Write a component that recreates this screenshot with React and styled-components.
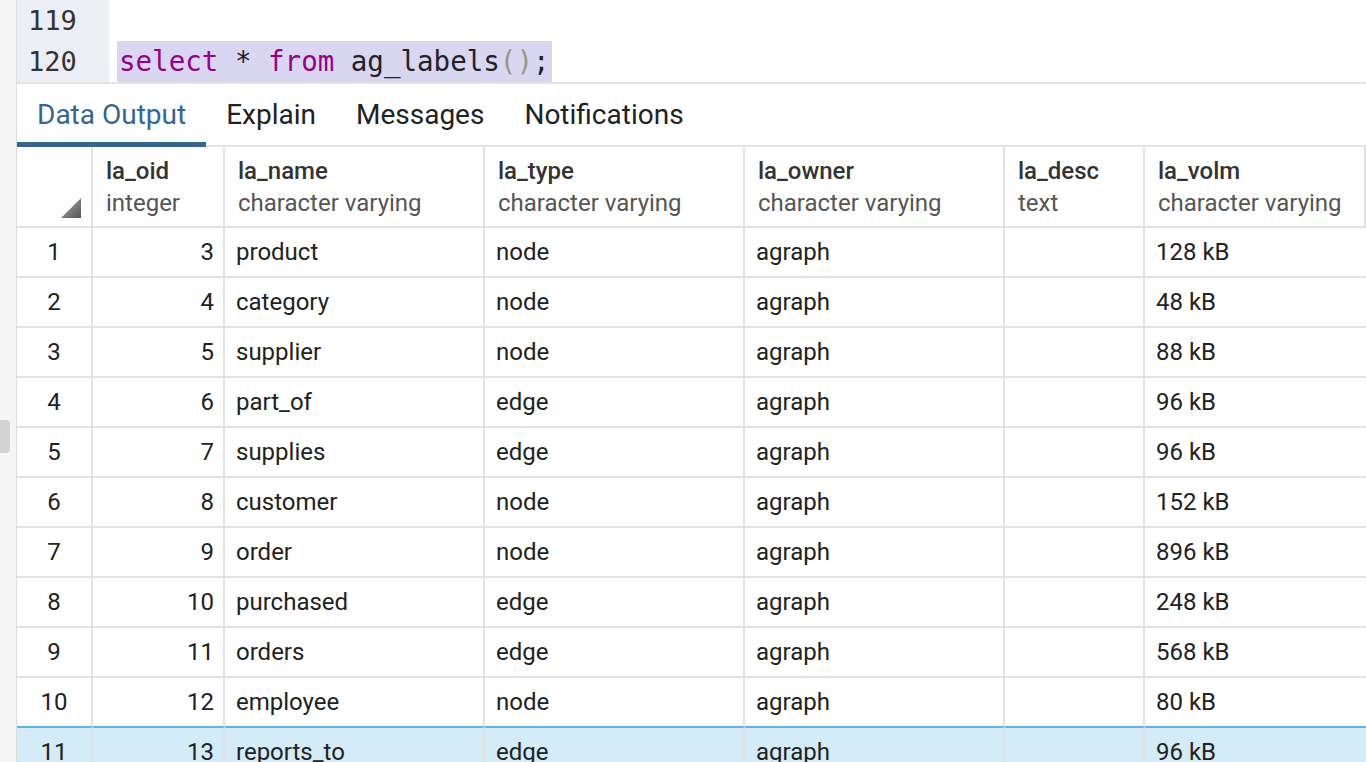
import React from "react";
import styled, { createGlobalStyle } from "styled-components";

const Global = createGlobalStyle`
  html, body { margin: 0; padding: 0; background: #fff; overflow: hidden; }
  body { font-family: Roboto, "Noto Sans", sans-serif; }
`;

const Page = styled.div`
  display: flex;
  width: 1366px;
  height: 762px;
  overflow: hidden;
`;

const SideStrip = styled.div`
  position: relative;
  width: 16px;
  flex: none;
  background: #f5f5f5;
  border-right: 1px solid #dddddd;
`;

const ScrollHandle = styled.div`
  position: absolute;
  left: 0;
  top: 420px;
  width: 10px;
  height: 33px;
  border-radius: 0 4px 4px 0;
  background: #d3d3d3;
`;

const Main = styled.div`
  flex: 1;
  display: flex;
  flex-direction: column;
  min-width: 0;
  & > * { flex: none; }
`;

const Editor = styled.div`
  display: flex;
  flex-direction: column;
  border-bottom: 2px solid #e4e4e4;
`;

const CodeLine = styled.div`
  display: flex;
  height: 41px;
  font-family: "DejaVu Sans Mono", "Liberation Mono", monospace;
  line-height: 41px;
`;

const Gutter = styled.div`
  width: 92px;
  flex: none;
  background: #eceef5;
  color: #333;
  padding-left: 11px;
  box-sizing: border-box;
  font-size: 27px;
`;

const Code = styled.div`
  padding-left: 8px;
  display: flex;
  align-items: stretch;
  font-size: 27.5px;
`;

const Highlight = styled.div`
  background: #d9d6f1;
  padding: 0 2px 0 2px;
  color: #222;
  white-space: pre;
  line-height: 40px;
`;

const Kw = styled.span`
  color: #990088;
`;

const Paren = styled.span`
  color: #999980;
`;

const Tabs = styled.div`
  display: flex;
  height: 63px;
  align-items: stretch;
  border-bottom: 2px solid #e4e4e4;
  box-sizing: border-box;
`;

const Tab = styled.div`
  display: flex;
  align-items: center;
  padding: 2px 20px 0;
  font-size: 28px;
  color: ${(p) => (p.$active ? "#336791" : "#222")};
  border-bottom: 5px solid ${(p) => (p.$active ? "#336791" : "transparent")};
  margin-bottom: -2px;
`;

const Table = styled.div`
  display: grid;
  grid-template-columns: 76px 132px 260px 260px 260px 140px 1fr;
`;

const HeadCell = styled.div`
  height: 81px;
  box-sizing: border-box;
  border-right: 2px solid #e2e2e2;
  border-bottom: 2px solid #e2e2e2;
  padding: 8px 12px 0 13px;
  position: relative;
  &:last-child { border-right: none; }
`;

const Corner = styled.div`
  position: absolute;
  right: 10px;
  bottom: 8px;
  width: 20px;
  height: 20px;
  clip-path: polygon(100% 0, 100% 100%, 0 100%);
  background: linear-gradient(135deg, #aaa, #555);
`;

const ColName = styled.div`
  font-size: 24px;
  font-weight: 500;
  color: #333;
  line-height: 32px;
`;

const ColType = styled.div`
  font-size: 24px;
  color: #555;
  line-height: 32px;
`;

const Cell = styled.div`
  height: 50px;
  box-sizing: border-box;
  border-right: 2px solid #e2e2e2;
  border-bottom: 2px solid #e2e2e2;
  ${(p) => p.$sel && "border-top: 2px solid #5cb5e6; margin-top: -2px; height: 52px;"}
  background: ${(p) => (p.$sel ? "#d4ebf8" : "#fff")};
  display: flex;
  align-items: center;
  justify-content: ${(p) => (p.$align === "right" ? "flex-end" : p.$align === "center" ? "center" : "flex-start")};
  padding: 0 ${(p) => (p.$align === "right" ? "9px" : "11px")};
  font-size: 24px;
  color: #222;
  white-space: nowrap;
  &:nth-child(7n) { border-right: none; }
`;

const columns = [
  { name: "la_oid", type: "integer" },
  { name: "la_name", type: "character varying" },
  { name: "la_type", type: "character varying" },
  { name: "la_owner", type: "character varying" },
  { name: "la_desc", type: "text" },
  { name: "la_volm", type: "character varying" },
];

const rows = [
  [3, "product", "node", "agraph", "", "128 kB"],
  [4, "category", "node", "agraph", "", "48 kB"],
  [5, "supplier", "node", "agraph", "", "88 kB"],
  [6, "part_of", "edge", "agraph", "", "96 kB"],
  [7, "supplies", "edge", "agraph", "", "96 kB"],
  [8, "customer", "node", "agraph", "", "152 kB"],
  [9, "order", "node", "agraph", "", "896 kB"],
  [10, "purchased", "edge", "agraph", "", "248 kB"],
  [11, "orders", "edge", "agraph", "", "568 kB"],
  [12, "employee", "node", "agraph", "", "80 kB"],
  [13, "reports_to", "edge", "agraph", "", "96 kB"],
];

export default function App() {
  return (
    <>
      <Global />
      <Page>
        <SideStrip>
          <ScrollHandle />
        </SideStrip>
        <Main>
          <Editor>
            <CodeLine>
              <Gutter>119</Gutter>
              <Code />
            </CodeLine>
            <CodeLine>
              <Gutter>120</Gutter>
              <Code>
                <Highlight>
                  <Kw>select</Kw>{" * "}<Kw>from</Kw>{" ag_labels"}<Paren>()</Paren>;
                </Highlight>
              </Code>
            </CodeLine>
          </Editor>
          <Tabs>
            <Tab $active>Data Output</Tab>
            <Tab>Explain</Tab>
            <Tab>Messages</Tab>
            <Tab>Notifications</Tab>
          </Tabs>
          <Table>
            <HeadCell>
              <Corner />
            </HeadCell>
            {columns.map((c) => (
              <HeadCell key={c.name}>
                <ColName>{c.name}</ColName>
                <ColType>{c.type}</ColType>
              </HeadCell>
            ))}
            {rows.map((r, i) => {
              const sel = i === 10;
              return (
                <React.Fragment key={i}>
                  <Cell $align="center" $sel={sel}>{i + 1}</Cell>
                  <Cell $align="right" $sel={sel}>{r[0]}</Cell>
                  <Cell $sel={sel}>{r[1]}</Cell>
                  <Cell $sel={sel}>{r[2]}</Cell>
                  <Cell $sel={sel}>{r[3]}</Cell>
                  <Cell $sel={sel}>{r[4]}</Cell>
                  <Cell $sel={sel}>{r[5]}</Cell>
                </React.Fragment>
              );
            })}
          </Table>
        </Main>
      </Page>
    </>
  );
}
